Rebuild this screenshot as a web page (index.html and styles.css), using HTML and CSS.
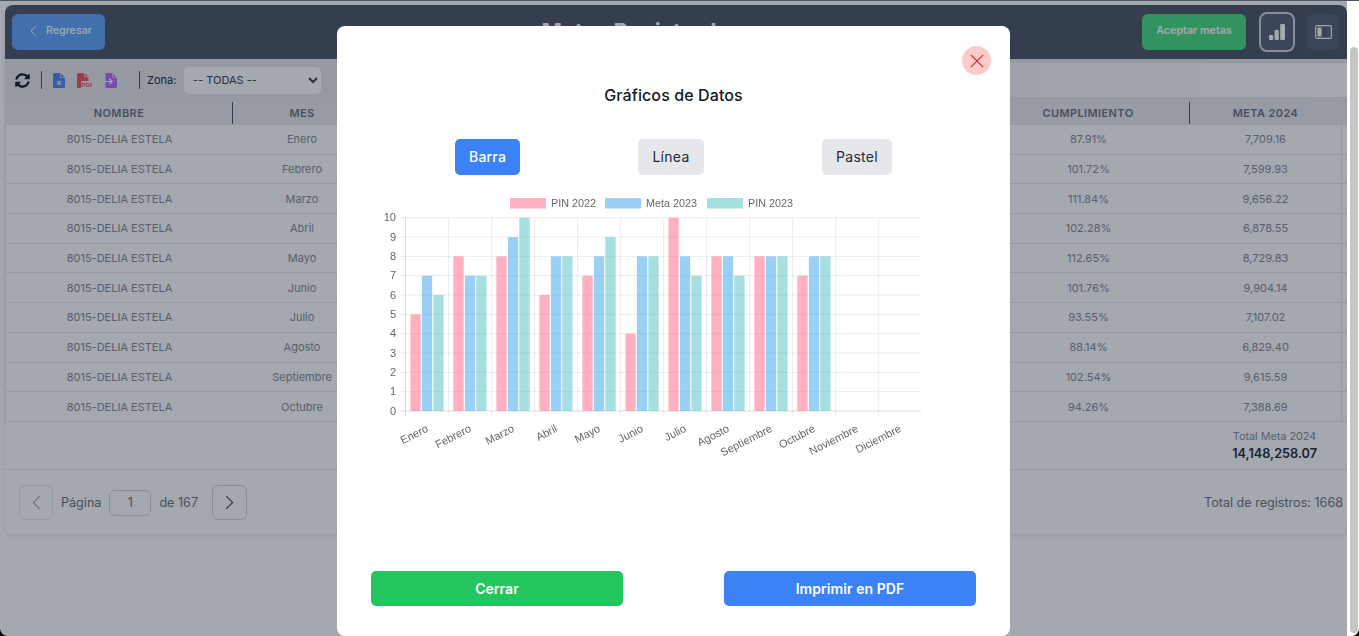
FILE: index.html
```html
<!DOCTYPE html>
<html lang="es">
<head>
<meta charset="utf-8">
<title>Metas Registradas</title>
<link rel="stylesheet" href="styles.css">
</head>
<body>
<div class="shell">
  <main class="main">
    <section class="card">
      <header class="topbar">
        <button class="btn btn-back">
          <svg class="ico-chev" viewBox="0 0 8 12"><path d="M6.5 .8 1.2 6l5.3 5.2"/></svg>
          Regresar
        </button>
        <h1 class="title">Metas Registradas</h1>
        <button class="btn btn-accept">Aceptar metas</button>
        <button class="icon-btn icon-btn-ring" aria-label="Gráficos">
          <svg viewBox="0 0 16 16" class="ico-bars"><rect x="0" y="11" width="4.2" height="5" rx="1"/><rect x="5.6" y="6" width="4.2" height="10" rx="1"/><rect x="11.2" y="0" width="4.8" height="16" rx="1"/></svg>
        </button>
        <button class="icon-btn" aria-label="Panel">
          <svg viewBox="0 0 17 14" class="ico-panel"><rect x=".6" y=".6" width="15.8" height="12.8" rx="1.5"/><rect class="fill" x="2.5" y="2.5" width="4" height="9" rx=".6"/></svg>
        </button>
      </header>

      <div class="toolbar">
        <div class="tools">
          <svg class="ico-sync" viewBox="0 0 512 512"><path d="M370.72 133.28C339.458 104.008 298.888 87.962 255.848 88c-77.458.068-144.328 53.178-162.791 126.85-1.344 5.363-6.122 9.15-11.651 9.15H24.103c-7.498 0-13.194-6.807-11.807-14.176C33.933 94.924 134.813 8 256 8c66.448 0 126.791 26.136 171.315 68.685L463.03 40.97C478.149 25.851 504 36.559 504 57.941V192c0 13.255-10.745 24-24 24H345.941c-21.382 0-32.09-25.851-16.971-40.971l41.75-41.749zM32 296h134.059c21.382 0 32.09 25.851 16.971 40.971l-41.75 41.75c31.262 29.273 71.835 45.319 114.876 45.28 77.418-.07 144.315-53.144 162.787-126.849 1.344-5.363 6.122-9.15 11.651-9.15h57.304c7.498 0 13.194 6.807 11.807 14.176C478.067 417.076 377.187 504 256 504c-66.448 0-126.791-26.136-171.315-68.685L48.97 471.03C33.851 486.149 8 475.441 8 454.059V320c0-13.255 10.745-24 24-24z"/></svg>
          <span class="sep"></span>
          <svg class="ico-file file-x" viewBox="0 0 12 15"><path d="M1.5 0H7.4L12 4.6V13.5A1.5 1.5 0 0 1 10.5 15H1.5A1.5 1.5 0 0 1 0 13.5V1.5A1.5 1.5 0 0 1 1.5 0Z"/><path class="cut" d="M7.6 0V4.4H12"/><text x="6" y="12.2" class="file-letter">x</text></svg>
          <svg class="ico-file file-pdf" viewBox="0 0 15 15"><path d="M1.5 0H7.4L11.5 4.1V8H4.2V15H1.5A1.5 1.5 0 0 1 0 13.5V1.5A1.5 1.5 0 0 1 1.5 0Z"/><path class="cut" d="M7.6 0V4H11.5"/><text x="4.4" y="14" class="file-pdf-text">PDF</text></svg>
          <svg class="ico-file file-imp" viewBox="0 0 16 15"><path d="M5 0H10.4L15 4.6V13.5A1.5 1.5 0 0 1 13.5 15H5A1.5 1.5 0 0 1 3.5 13.5V1.5A1.5 1.5 0 0 1 5 0Z"/><path class="cut" d="M10.6 0V4.4H15"/><path class="arrow" d="M0 8.5H10M7.2 5.6 10.2 8.5 7.2 11.4"/></svg>
          <span class="sep sep-b"></span>
          <label class="zone-label" for="zona">Zona:</label>
          <select class="zone" id="zona"><option>-- TODAS --</option></select>
        </div>
      </div>

      <div class="table">
        <div class="row row-head">
          <span class="cell cell-div">NOMBRE</span><span class="cell">MES</span><span class="cell"></span><span class="cell cell-div">CUMPLIMIENTO</span><span class="cell">META 2024</span>
        </div>
        <div class="row"><span class="cell">8015-DELIA ESTELA</span><span class="cell">Enero</span><span class="cell"></span><span class="cell">87.91%</span><span class="cell">7,709.16</span></div>
        <div class="row"><span class="cell">8015-DELIA ESTELA</span><span class="cell">Febrero</span><span class="cell"></span><span class="cell">101.72%</span><span class="cell">7,599.93</span></div>
        <div class="row"><span class="cell">8015-DELIA ESTELA</span><span class="cell">Marzo</span><span class="cell"></span><span class="cell">111.84%</span><span class="cell">9,656.22</span></div>
        <div class="row"><span class="cell">8015-DELIA ESTELA</span><span class="cell">Abril</span><span class="cell"></span><span class="cell">102.28%</span><span class="cell">6,878.55</span></div>
        <div class="row"><span class="cell">8015-DELIA ESTELA</span><span class="cell">Mayo</span><span class="cell"></span><span class="cell">112.65%</span><span class="cell">8,729.83</span></div>
        <div class="row"><span class="cell">8015-DELIA ESTELA</span><span class="cell">Junio</span><span class="cell"></span><span class="cell">101.76%</span><span class="cell">9,904.14</span></div>
        <div class="row"><span class="cell">8015-DELIA ESTELA</span><span class="cell">Julio</span><span class="cell"></span><span class="cell">93.55%</span><span class="cell">7,107.02</span></div>
        <div class="row"><span class="cell">8015-DELIA ESTELA</span><span class="cell">Agosto</span><span class="cell"></span><span class="cell">88.14%</span><span class="cell">6,829.40</span></div>
        <div class="row"><span class="cell">8015-DELIA ESTELA</span><span class="cell">Septiembre</span><span class="cell"></span><span class="cell">102.54%</span><span class="cell">9,615.59</span></div>
        <div class="row"><span class="cell">8015-DELIA ESTELA</span><span class="cell">Octubre</span><span class="cell"></span><span class="cell">94.26%</span><span class="cell">7,388.69</span></div>
      </div>

      <div class="totals">
        <div class="total-box">
          <div class="total-label">Total Meta 2024</div>
          <div class="total-value">14,148,258.07</div>
        </div>
      </div>

      <footer class="pager">
        <button class="page-btn page-btn-off" aria-label="Anterior"><svg viewBox="0 0 8 14"><path d="M7 1 1 7l6 6"/></svg></button>
        <span class="page-text">Página</span>
        <span class="page-input">1</span>
        <span class="page-text">de 167</span>
        <button class="page-btn page-btn-next" aria-label="Siguiente"><svg viewBox="0 0 8 14"><path d="M1 1l6 6-6 6"/></svg></button>
        <span class="page-total">Total de registros: 1668</span>
      </footer>
    </section>
  </main>
  <div class="scrollbar"><div class="thumb"></div></div>

  <div class="overlay">
    <div class="modal">
      <button class="close" aria-label="Cerrar">
        <svg viewBox="0 0 14 14"><path d="M.8.8l12.4 12.4M13.2.8.8 13.2"/></svg>
      </button>
      <h2 class="modal-title">Gráficos de Datos</h2>
      <div class="tabs">
        <button class="tab tab-on">Barra</button>
        <button class="tab">Línea</button>
        <button class="tab">Pastel</button>
      </div>

      <svg class="chart" viewBox="371 190 552 280" width="552" height="280">
        <path class="grid" d="M400 217.7H921M400 237H921M400 256.4H921M400 275.7H921M400 295H921M400 314.4H921M400 333.7H921M400 353H921M400 372.4H921M400 391.7H921"/>
        <path class="grid" d="M448.7 217.7V417M491.7 217.7V417M534.7 217.7V417M577.7 217.7V417M620.7 217.7V417M663.7 217.7V417M706.7 217.7V417M749.7 217.7V417M792.7 217.7V417M835.7 217.7V417M878.7 217.7V417"/>
        <path class="axis" d="M405.5 217.7V417M400 411H921"/>

        <rect class="c-pink" x="510" y="198" width="36" height="10.5"/>
        <text class="lg" x="551" y="207">PIN 2022</text>
        <rect class="c-blue" x="605" y="198" width="36" height="10.5"/>
        <text class="lg" x="646" y="207">Meta 2023</text>
        <rect class="c-teal" x="707" y="198" width="36" height="10.5"/>
        <text class="lg" x="748" y="207">PIN 2023</text>

        <g class="ylab">
          <text x="396" y="221">10</text><text x="396" y="240.5">9</text><text x="396" y="260">8</text><text x="396" y="279.2">7</text><text x="396" y="298.5">6</text><text x="396" y="318">5</text><text x="396" y="337.2">4</text><text x="396" y="356.5">3</text><text x="396" y="376">2</text><text x="396" y="395.2">1</text><text x="396" y="414.5">0</text>
        </g>

        <g transform="translate(0 411) scale(1 -19.33)">
          <rect class="c-pink" x="410.4" width="10.3" height="5"/><rect class="c-blue" x="421.9" width="10.3" height="7"/><rect class="c-teal" x="433.3" width="10.3" height="6"/>
          <rect class="c-pink" x="453.4" width="10.3" height="8"/><rect class="c-blue" x="464.9" width="10.3" height="7"/><rect class="c-teal" x="476.3" width="10.3" height="7"/>
          <rect class="c-pink" x="496.4" width="10.3" height="8"/><rect class="c-blue" x="507.9" width="10.3" height="9"/><rect class="c-teal" x="519.3" width="10.3" height="10"/>
          <rect class="c-pink" x="539.4" width="10.3" height="6"/><rect class="c-blue" x="550.9" width="10.3" height="8"/><rect class="c-teal" x="562.3" width="10.3" height="8"/>
          <rect class="c-pink" x="582.4" width="10.3" height="7"/><rect class="c-blue" x="593.9" width="10.3" height="8"/><rect class="c-teal" x="605.3" width="10.3" height="9"/>
          <rect class="c-pink" x="625.4" width="10.3" height="4"/><rect class="c-blue" x="636.9" width="10.3" height="8"/><rect class="c-teal" x="648.3" width="10.3" height="8"/>
          <rect class="c-pink" x="668.4" width="10.3" height="10"/><rect class="c-blue" x="679.9" width="10.3" height="8"/><rect class="c-teal" x="691.3" width="10.3" height="7"/>
          <rect class="c-pink" x="711.4" width="10.3" height="8"/><rect class="c-blue" x="722.9" width="10.3" height="8"/><rect class="c-teal" x="734.3" width="10.3" height="7"/>
          <rect class="c-pink" x="754.4" width="10.3" height="8"/><rect class="c-blue" x="765.9" width="10.3" height="8"/><rect class="c-teal" x="777.3" width="10.3" height="8"/>
          <rect class="c-pink" x="797.4" width="10.3" height="7"/><rect class="c-blue" x="808.9" width="10.3" height="8"/><rect class="c-teal" x="820.3" width="10.3" height="8"/>
        </g>

        <g class="xlab">
          <text transform="translate(429 431) rotate(-27)">Enero</text>
          <text transform="translate(472 431) rotate(-27)">Febrero</text>
          <text transform="translate(515 431) rotate(-27)">Marzo</text>
          <text transform="translate(558 431) rotate(-27)">Abril</text>
          <text transform="translate(601 431) rotate(-27)">Mayo</text>
          <text transform="translate(644 431) rotate(-27)">Junio</text>
          <text transform="translate(687 431) rotate(-27)">Julio</text>
          <text transform="translate(730 431) rotate(-27)">Agosto</text>
          <text transform="translate(773 431) rotate(-27)">Septiembre</text>
          <text transform="translate(816 431) rotate(-27)">Octubre</text>
          <text transform="translate(859 431) rotate(-27)">Noviembre</text>
          <text transform="translate(902 431) rotate(-27)">Diciembre</text>
        </g>
      </svg>

      <div class="modal-foot">
        <button class="foot-btn foot-green">Cerrar</button>
        <button class="foot-btn foot-blue">Imprimir en PDF</button>
      </div>
    </div>
  </div>
</div>
</body>
</html>
```
FILE: styles.css
```css
* { box-sizing: border-box; }
html, body { margin: 0; height: 636px; overflow: hidden; background: #000; }
body { font-family: Inter, "Liberation Sans", sans-serif; }
button { font-family: inherit; border: 0; padding: 0; }

.shell {
  position: relative;
  display: flex;
  width: 1359px;
  height: 636px;
  background: #fff;
  border-top: 1px solid #4b5563;
  border-radius: 0 0 8px 8px;
  overflow: hidden;
}
.main { width: 1347px; padding: 4px 0 0 5px; }
.scrollbar { width: 12px; padding: 46px 1px 3px 3px; background: #fff; }
.thumb { height: 100%; background: #c6c6c6; border-radius: 4px; }

.card {
  height: 529px;
  background: #fff;
  border-radius: 8px;
  box-shadow: 0 1px 4px rgba(0,0,0,.12);
  overflow: hidden;
}

.topbar {
  display: flex;
  align-items: center;
  height: 54px;
  padding: 0 8px 0 7px;
  background: #4b5563;
}
.btn {
  height: 36px;
  padding-bottom: 4px;
  border-radius: 6px;
  color: #fff;
  font-size: 10.7px;
  font-weight: 600;
}
.btn-back {
  display: flex;
  align-items: center;
  gap: 9px;
  width: 93px;
  padding-left: 18px;
  background: #60a5fa;
  font-weight: 500;
}
.ico-chev { width: 7px; height: 12px; fill: none; stroke: #fff; stroke-width: 1.1; margin-top: 2px; }
.title {
  flex: 1;
  margin: 0;
  padding-left: 36px;
  text-align: center;
  color: #fff;
  font-size: 22px;
  font-weight: 700;
  line-height: 26px;
  transform: translateY(-1px);
}
.btn-accept { width: 104px; margin-right: 13px; background: #4ade80; }
.icon-btn {
  display: flex;
  align-items: center;
  justify-content: center;
  width: 32px;
  height: 36px;
  border-radius: 6px;
  background: #596273;
}
.icon-btn-ring {
  width: 36px;
  height: 40px;
  margin-right: 12px;
  border: 2px solid #d1d5db;
  border-radius: 8px;
}
.ico-bars { width: 16px; height: 16px; fill: #fff; }
.ico-panel { width: 17px; height: 14px; fill: none; stroke: #fff; stroke-width: 1.1; }
.ico-panel .fill { fill: #fff; stroke: none; }

.toolbar { height: 43px; padding: 4px 0 5px; background: #e5e7eb; }
.tools {
  display: flex;
  align-items: center;
  height: 34px;
  padding-left: 10px;
  background: linear-gradient(to right, #e5e7eb 25%, #fff);
}
.ico-sync { width: 15px; height: 15px; fill: #111827; flex: none; }
.sep { width: 1px; height: 18px; margin: 0 11px 0 11px; background: #4b5563; }
.sep-b { margin: 0 7px 0 21px; }
.ico-file { height: 15px; flex: none; }
.file-x { width: 12px; margin-right: 12px; fill: #4f86f0; }
.file-pdf { width: 15px; margin-right: 10px; fill: #f25560; }
.file-imp { width: 16px; fill: #b968fa; }
.ico-file .cut { fill: none; stroke: #e5e7eb; stroke-width: .8; }
.ico-file .arrow { fill: none; stroke: #fff; stroke-width: 1.2; }
.file-letter { fill: #fff; font-size: 8px; font-weight: 700; text-anchor: middle; font-family: "Liberation Sans", sans-serif; }
.file-pdf-text { fill: #f25560; font-size: 6px; font-weight: 700; font-family: "Liberation Sans", sans-serif; }
.zone-label { width: 37px; color: #1f2937; font-size: 11px; font-weight: 400; flex: none; }
.zone {
  width: 137px;
  height: 27px;
  padding-left: 5px;
  border: 0;
  border-radius: 5px;
  background-color: #fff;
  color: #374151;
  font-family: inherit;
  font-size: 11px;
}

.table { border-left: 1px solid #e5e7eb; }
.row {
  display: grid;
  grid-template-columns: 227px 138px 1fr 203px 152px 5px;
  align-items: center;
  height: 29.7px;
  border-bottom: 1px solid #e5e7eb;
  color: #848a96;
  font-size: 11px;
}
.row > .cell:last-child { border-right: 1px solid #e5e7eb; }
.cell { display: flex; align-items: center; justify-content: center; height: 100%; }
.row-head {
  height: 23px;
  border-bottom: 1px solid #e5e7eb;
  background: #e9ebee;
  color: #6b7280;
  font-weight: 600;
  letter-spacing: .4px;
}
.cell-div { border-right: 1px solid #4b5563; }

.totals {
  display: flex;
  justify-content: flex-end;
  height: 48px;
  padding: 7px 30px 0 0;
  border-bottom: 1px solid #e5e7eb;
}
.total-box { text-align: center; }
.total-label { color: #848a96; font-size: 10.8px; line-height: 15px; }
.total-value { color: #1f2937; font-size: 12.7px; font-weight: 600; line-height: 19px; }

.pager {
  display: flex;
  align-items: center;
  height: 64px;
  padding: 2px 4px 0 14px;
  color: #6b7280;
  font-size: 12.6px;
}
.page-btn {
  display: flex;
  align-items: center;
  justify-content: center;
  width: 35px;
  height: 35px;
  background: #fff;
  border: 1px solid #d1d5db;
  border-radius: 6px;
}
.page-btn svg { width: 9px; height: 15px; fill: none; stroke: #374151; stroke-width: 1; }
.page-btn-off { width: 34px; border-color: #e5e7eb; }
.page-btn-off svg { stroke: #9ca3af; }
.page-btn-next { margin-left: 14px; }
.page-text { margin-left: 8px; }
.page-input {
  width: 42px;
  height: 26px;
  margin-left: 8px;
  border: 1px solid #d1d5db;
  border-radius: 6px;
  text-align: center;
  line-height: 24px;
}
.page-total { margin-left: auto; }

.overlay {
  position: absolute;
  top: -1px;
  left: 0;
  right: 12px;
  bottom: 0;
  background: rgba(15, 25, 45, .38);
}
.modal {
  position: relative;
  display: flex;
  flex-direction: column;
  width: 673px;
  height: 610px;
  margin: 26px auto 0;
  padding: 57px 34px 30px;
  background: #fff;
  border-radius: 8px;
}
.close {
  position: absolute;
  top: 20px;
  right: 19px;
  display: flex;
  align-items: center;
  justify-content: center;
  width: 29px;
  height: 29px;
  border-radius: 50%;
  background: #fecaca;
}
.close svg { width: 14px; height: 14px; fill: none; stroke: #dc2626; stroke-width: 1.2; }
.modal-title {
  margin: 0;
  color: #111827;
  font-size: 16px;
  font-weight: 500;
  line-height: 24px;
  letter-spacing: .1px;
  text-align: center;
}
.tabs {
  display: flex;
  justify-content: space-between;
  margin-top: 32px;
  padding: 0 84px;
}
.tab {
  height: 36px;
  padding: 0 14px 2px;
  border-radius: 5px;
  background: #e5e7eb;
  color: #1f2937;
  font-size: 14px;
  font-weight: 400;
  letter-spacing: .3px;
}
.tab-on { background: #3b82f6; color: #fff; font-weight: 500; letter-spacing: .2px; }

.chart {
  display: block;
  flex: none;
  margin-top: 15px;
  font-family: "Liberation Sans", Arial, sans-serif;
  filter: blur(.35px);
}
.grid { fill: none; stroke: rgba(0,0,0,.08); stroke-width: 1; }
.axis { fill: none; stroke: rgba(0,0,0,.14); stroke-width: 1; }
.c-pink { fill: rgba(255,99,132,.5); }
.c-blue { fill: rgba(54,162,235,.5); }
.c-teal { fill: rgba(75,192,192,.5); }
.lg { fill: #666; font-size: 10.8px; }
.ylab text { fill: #666; font-size: 11px; text-anchor: end; }
.xlab text { fill: #666; font-size: 11px; text-anchor: end; }

.modal-foot {
  display: flex;
  justify-content: space-between;
  margin-top: auto;
}
.foot-btn {
  width: 252px;
  height: 35px;
  border-radius: 5px;
  color: #fff;
  font-size: 14px;
  font-weight: 600;
  letter-spacing: .07px;
}
.foot-green { background: #22c55e; }
.foot-blue { background: #3b82f6; }
```
